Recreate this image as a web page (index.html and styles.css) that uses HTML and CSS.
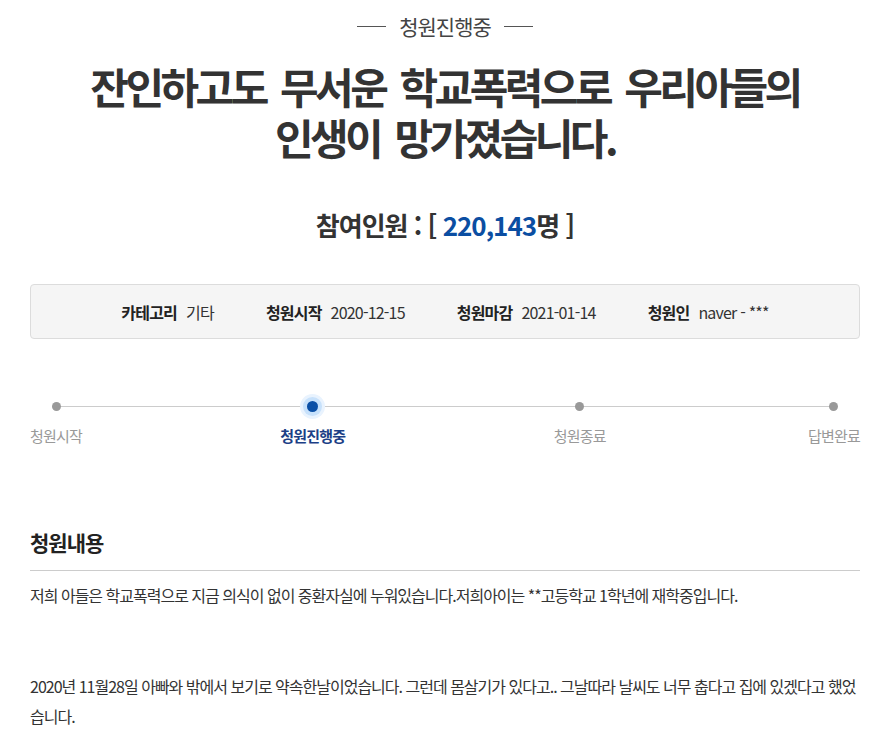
FILE: index.html
```html
<!DOCTYPE html>
<html lang="ko">
<head>
<meta charset="utf-8">
<title>청원진행중</title>
<link rel="stylesheet" href="styles.css">
</head>
<body>
<div class="wrap">
  <div class="status"><span class="status-text">청원진행중</span></div>
  <h1 class="title">잔인하고도 무서운 학교폭력으로 우리아들의<br>인생이 망가졌습니다.</h1>
  <div class="count">참여인원 : [ <span class="num">220,143</span>명 ]</div>
  <ul class="info">
    <li><strong>카테고리</strong><span>기타</span></li>
    <li><strong>청원시작</strong><span>2020-12-15</span></li>
    <li><strong>청원마감</strong><span>2021-01-14</span></li>
    <li><strong>청원인</strong><span>naver - ***</span></li>
  </ul>
  <div class="steps">
    <div class="track"></div>
    <div class="step s1"><i class="dot"></i><span>청원시작</span></div>
    <div class="step s2 on"><i class="dot"></i><span>청원진행중</span></div>
    <div class="step s3"><i class="dot"></i><span>청원종료</span></div>
    <div class="step s4"><i class="dot"></i><span>답변완료</span></div>
  </div>
  <h2 class="sec">청원내용</h2>
  <div class="content">
    <p>저희 아들은 학교폭력으로 지금 의식이 없이 중환자실에 누워있습니다.저희아이는 **고등학교 1학년에 재학중입니다.</p>
    <p class="gap">2020년 11월28일 아빠와 밖에서 보기로 약속한날이었습니다. 그런데 몸살기가 있다고.. 그날따라 날씨도 너무 춥다고 집에 있겠다고 했었습니다.</p>
  </div>
</div>
</body>
</html>
```
FILE: styles.css
```css
html, body {
  margin: 0;
  padding: 0;
  background: #fff;
}
body {
  font-family: "Noto Sans CJK KR", "Noto Sans", sans-serif;
  color: #333;
}
.wrap {
  width: 830px;
  margin-left: 30px;
}
.status {
  display: flex;
  justify-content: center;
  padding-top: 11px;
}
.status-text {
  display: flex;
  align-items: center;
  gap: 13px;
  font-size: 21px;
  letter-spacing: -1px;
  line-height: 30px;
  color: #444;
}
.status-text::before,
.status-text::after {
  content: "";
  width: 29px;
  height: 1px;
  background: #555;
}
.title {
  margin: 19px 0 0;
  text-align: center;
  font-size: 42px;
  font-weight: 700;
  letter-spacing: -3.55px;
  word-spacing: 6px;
  line-height: 51px;
  color: #333;
}
.count {
  margin-top: 46px;
  text-align: center;
  font-size: 26px;
  font-weight: 700;
  letter-spacing: -1px;
  line-height: 34px;
  color: #333;
}
.count .num {
  color: #0b4ea2;
}
.info {
  list-style: none;
  margin: 42px 0 0;
  padding: 0;
  height: 53px;
  display: flex;
  justify-content: center;
  align-items: center;
  gap: 52px;
  background: #f5f5f5;
  border: 1px solid #dcdcdc;
  border-radius: 4px;
  font-size: 16px;
  letter-spacing: -0.8px;
  color: #333;
}
.info li {
  display: flex;
  gap: 9px;
}
.info strong {
  font-weight: 700;
  color: #222;
}
.steps {
  position: relative;
  margin-top: 57px;
  display: flex;
  justify-content: space-between;
}
.track {
  position: absolute;
  left: 26px;
  right: 27px;
  top: 10px;
  height: 1px;
  background: #ccc;
}
.step {
  position: relative;
  display: flex;
  flex-direction: column;
  align-items: center;
  font-size: 15px;
  letter-spacing: -0.8px;
  color: #999;
}
.step .dot {
  width: 9px;
  height: 9px;
  margin-top: 6px;
  border-radius: 50%;
  background: #999;
}
.step span {
  margin-top: 14px;
  line-height: 22px;
}
.s2 { margin-right: 10px; }
.s3 { margin-right: 4px; }
.step.on {
  color: #1c3f86;
  font-weight: 700;
}
.step.on .dot {
  width: 11px;
  height: 11px;
  margin-top: 5px;
  margin-bottom: -1px;
  background: #0a4fa6;
  box-shadow: 0 0 0 4px #c7e1fb, 0 0 0 7px #e9f3fe;
}
.sec {
  margin: 80px 0 0;
  padding-bottom: 13px;
  border-bottom: 1px solid #ccc;
  font-size: 21px;
  font-weight: 700;
  letter-spacing: -1px;
  line-height: 30px;
  color: #222;
}
.content {
  padding-top: 10px;
  font-size: 16px;
  letter-spacing: -1px;
  line-height: 29.5px;
  color: #333;
}
.content p {
  margin: 0;
}
.content .gap {
  margin-top: 61.5px;
}
```
